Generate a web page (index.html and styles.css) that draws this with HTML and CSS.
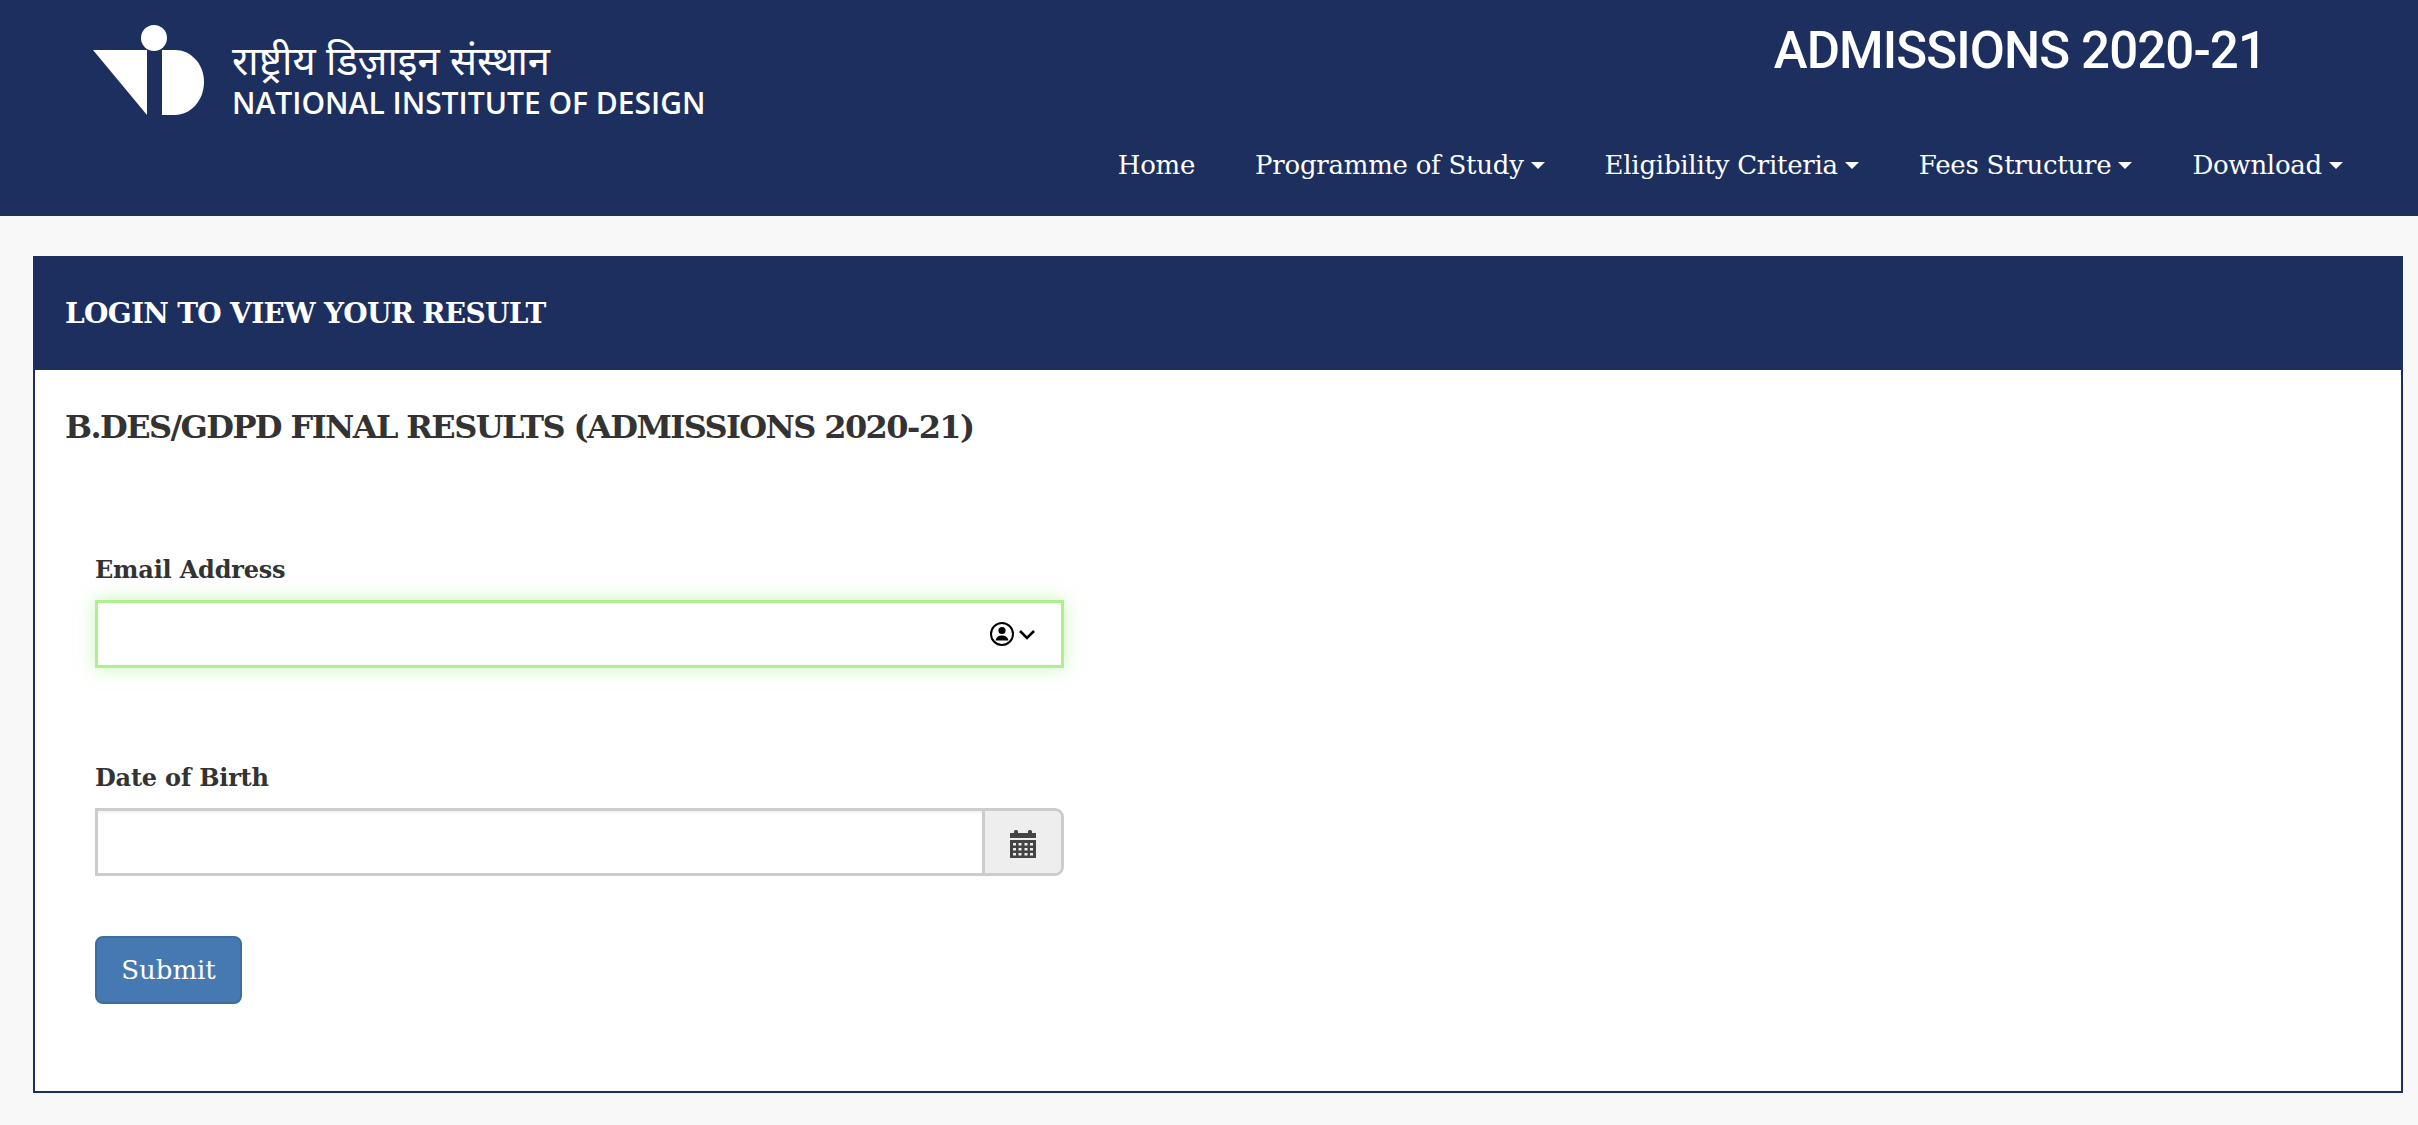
FILE: index.html
```html
<!DOCTYPE html>
<html lang="en">
<head>
    <meta charset="UTF-8">
    <title>NID Admissions 2020-21</title>
    <link rel="stylesheet" href="styles.css">
</head>
<body>
    <header class="site-header">
        <a class="brand" href="#">
            <svg class="brand-mark" viewBox="0 0 112 80" width="112" height="80">
                <circle cx="61" cy="14" r="13" fill="#fff"/>
                <path d="M0 26H54V91Z" fill="#fff"/>
                <path d="M69 26H82C97 26 111 39 111 58C111 77 97 91 82 91H69Z" fill="#fff"/>
            </svg>
            <div class="brand-text">
                <div class="brand-hindi">राष्ट्रीय डिज़ाइन संस्थान</div>
                <div class="brand-english">NATIONAL INSTITUTE OF DESIGN</div>
            </div>
        </a>
        <div class="header-right">
            <div class="admissions">ADMISSIONS 2020-21</div>
            <nav class="main-nav">
                <a href="#">Home</a>
                <a href="#" class="has-caret">Programme of Study</a>
                <a href="#" class="has-caret">Eligibility Criteria</a>
                <a href="#" class="has-caret">Fees Structure</a>
                <a href="#" class="has-caret">Download</a>
            </nav>
        </div>
    </header>

    <main class="panel">
        <div class="panel-head">LOGIN TO VIEW YOUR RESULT</div>
        <div class="panel-body">
            <h2 class="result-title">B.DES/GDPD FINAL RESULTS (ADMISSIONS 2020-21)</h2>
            <form class="login-form">
                <label class="field-label" for="email">Email Address</label>
                <div class="input-wrap focused">
                    <input class="field-input" id="email" type="text">
                    <svg class="autofill-icon" viewBox="0 0 46 26" width="46" height="26" fill="none" stroke="#000">
                        <circle cx="12" cy="13" r="11" stroke-width="2"/>
                        <circle cx="12" cy="9.5" r="3.6" fill="#000" stroke="none"/>
                        <path d="M5.5 19.5C6.5 15.5 9 14.5 12 14.5S17.5 15.5 18.5 19.5Z" fill="#000" stroke="none"/>
                        <path d="M30 10L37 17L44 10" stroke-width="2.6"/>
                    </svg>
                </div>

                <label class="field-label dob-label" for="dob">Date of Birth</label>
                <div class="input-wrap date-wrap">
                    <input class="field-input" id="dob" type="text">
                    <span class="input-addon">
                        <svg viewBox="0 0 26 28" width="26" height="28" fill="#444">
                            <path d="M0 3H4V1.5C4 .5 5 0 6 0S8 .5 8 1.5V3H18V1.5C18 .5 19 0 20 0S22 .5 22 1.5V3H26V8H0Z"/>
                            <path fill-rule="evenodd" d="M0 10H26V28H0ZM3 13V15.5H6V13ZM8.5 13V15.5H11.5V13ZM14.5 13V15.5H17.5V13ZM20 13V15.5H23V13ZM3 18V20.5H6V18ZM8.5 18V20.5H11.5V18ZM14.5 18V20.5H17.5V18ZM20 18V20.5H23V18ZM3 23V25.5H6V23ZM8.5 23V25.5H11.5V23ZM14.5 23V25.5H17.5V23ZM20 23V25.5H23V23Z"/>
                        </svg>
                    </span>
                </div>

                <button class="submit-btn" type="button">Submit</button>
            </form>
        </div>
    </main>
</body>
</html>
```

FILE: styles.css
```css
:root {
    --navy: #1d2f5f;
    --text-color: #333333;
    --slab: "DejaVu Serif", "Liberation Serif", serif;
}

body {
    margin: 0;
    background-color: #f8f8f8;
    font-family: var(--slab);
    color: var(--text-color);
}

.site-header {
    display: flex;
    justify-content: space-between;
    height: 216px;
    box-sizing: border-box;
    background-color: var(--navy);
    color: white;
}
.brand {
    display: flex;
    align-items: flex-start;
    gap: 27px;
    padding: 24px 0 0 93px;
    color: white;
    text-decoration: none;
}
.brand-mark {
    flex-shrink: 0;
    overflow: visible;
}
.brand-text {
    padding-top: 19px;
}
.brand-hindi {
    font-family: "Noto Sans Devanagari", "Noto Sans", sans-serif;
    font-size: 40px;
    line-height: 44px;
}
.brand-english {
    font-family: "Open Sans", sans-serif;
    font-size: 30px;
    font-weight: 600;
    line-height: 32px;
    white-space: nowrap;
}

.header-right {
    display: flex;
    flex-direction: column;
    align-items: flex-end;
    padding-right: 75px;
}
.admissions {
    margin: 20px 77px 0 0;
    font-family: Roboto, sans-serif;
    font-size: 51px;
    font-weight: 500;
    letter-spacing: -0.9px;
    line-height: 62px;
    white-space: nowrap;
}
.main-nav {
    display: flex;
    gap: 60px;
    margin-top: 61px;
    line-height: 44px;
}
.main-nav a {
    display: flex;
    align-items: center;
    color: white;
    font-size: 26px;
    letter-spacing: -0.25px;
    text-decoration: none;
    white-space: nowrap;
}
.has-caret::after {
    content: "";
    margin-left: 7px;
    border-top: 7px solid white;
    border-left: 7.5px solid transparent;
    border-right: 7.5px solid transparent;
}

.panel {
    margin: 40px 15px 32px 33px;
    height: 837px;
    box-sizing: border-box;
    border: 2px solid var(--navy);
    background: white;
}
.panel-head {
    height: 112px;
    padding-left: 30px;
    background-color: var(--navy);
    color: white;
    font-size: 28px;
    font-weight: bold;
    letter-spacing: -0.7px;
    line-height: 112px;
}
.panel-body {
    padding: 33px 30px 0;
}
.result-title {
    margin: 0;
    font-size: 32px;
    letter-spacing: -1.6px;
    line-height: 48px;
}
.login-form {
    display: flex;
    flex-direction: column;
    align-items: flex-start;
    padding: 101px 0 0 30px;
}
.field-label {
    margin-bottom: 12px;
    font-size: 24px;
    font-weight: bold;
    letter-spacing: -0.2px;
    line-height: 36px;
}
.dob-label {
    margin-top: 92px;
}
.input-wrap {
    display: flex;
    align-items: center;
    position: relative;
    width: 969px;
    height: 68px;
    box-sizing: border-box;
    border: 3px solid #cccccc;
    background: white;
    box-shadow: inset 0 2px 2px rgba(0, 0, 0, 0.05);
}
.input-wrap.focused {
    border-color: #aef08f;
    box-shadow: 0 0 16px rgba(150, 235, 110, 0.5);
}
.date-wrap {
    border-radius: 0 9px 9px 0;
}
.field-input {
    flex: 1;
    height: 100%;
    min-width: 0;
    padding: 0 20px;
    border: none;
    outline: none;
    background: transparent;
}
.autofill-icon {
    position: absolute;
    right: 25px;
    top: 18px;
}
.input-addon {
    display: flex;
    align-items: center;
    justify-content: center;
    width: 76px;
    height: 100%;
    box-sizing: content-box;
    padding-top: 0;
    border-left: 3px solid #cccccc;
    border-radius: 0 6px 6px 0;
    background: #eeeeee;
}
.input-addon svg {
    margin-top: 4px;
}
.submit-btn {
    width: 147px;
    height: 68px;
    margin-top: 60px;
    padding: 0;
    border: 2px solid #3f6c9f;
    border-radius: 8px;
    background: #4679b2;
    color: white;
    font-family: var(--slab);
    font-size: 26px;
}
```
